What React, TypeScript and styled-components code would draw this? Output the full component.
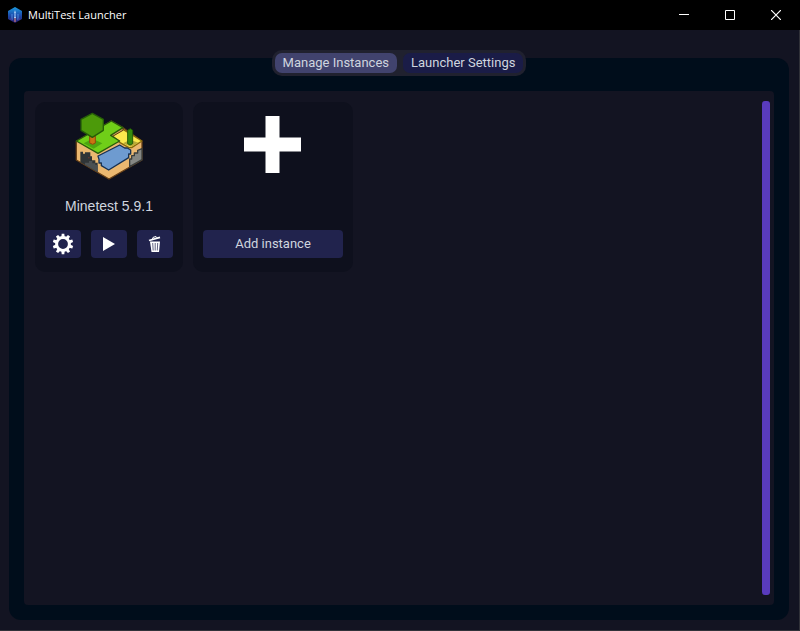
import React from "react";
import styled, { createGlobalStyle } from "styled-components";

const GlobalStyle = createGlobalStyle`
  *, *::before, *::after { box-sizing: border-box; }
  html, body, #root { height: 100%; }
  body { margin: 0; background: #131422; }
  button { border: 0; padding: 0; color: inherit; font: inherit; cursor: pointer; }
  svg { display: block; }
`;

const Window = styled.div`
  display: flex;
  flex-direction: column;
  min-height: 100%;
  background: #131422;
  color: #cfd5df;
  font: 13px/16px Roboto, sans-serif;
`;

const TitleBar = styled.header`
  display: flex;
  align-items: center;
  height: 30px;
  padding: 0 1px 0 7px;
  background: #000;
  color: #fff;
`;

const AppTitle = styled.h1`
  flex: 1;
  margin: 0 0 0 5px;
  font: 400 11px/16px "Open Sans", "Noto Sans", sans-serif;
`;

const CaptionButton = styled.button`
  display: grid;
  place-items: center;
  width: 46px;
  height: 28px;
  background: transparent;
`;

const Body = styled.main`
  flex: 1;
  display: flex;
  flex-direction: column;
  padding: 28px 10px 10px 9px;
  border: solid #303138;
  border-width: 0 1px 1px 0;
`;

const TabPanel = styled.section`
  flex: 1;
  display: flex;
  flex-direction: column;
  align-items: center;
  padding: 0 15px 15px;
  border-radius: 12px;
  background: #000d1b;
`;

const TabList = styled.div`
  display: flex;
  gap: 6px;
  margin: -8px 0 15px;
  padding: 3px;
  border-radius: 10px;
  background: #20212f;
`;

const Tab = styled.button<{ $active?: boolean }>`
  height: 20px;
  padding: 0 8px;
  border-radius: 7px;
  background: ${(p) => (p.$active ? "#41436e" : "#1a1c47")};
`;

const ScrollArea = styled.div`
  flex: 1;
  align-self: stretch;
  display: flex;
  justify-content: space-between;
  padding: 10px 4px 10px 11px;
  border-radius: 4px;
  background: #131422;
`;

const Instances = styled.div`
  display: flex;
  align-items: flex-start;
  gap: 10px;
  padding-top: 1px;
`;

const Card = styled.article`
  display: flex;
  flex-direction: column;
  align-items: center;
  justify-content: space-between;
  height: 170px;
  padding: 10px 10px 14px;
  border-radius: 10px;
  background: #0e101d;
`;

const InstanceName = styled.h2`
  margin: 0;
  font: 400 14px/16px "Liberation Sans", Arial, sans-serif;
`;

const Actions = styled.div`
  display: flex;
  gap: 10px;
`;

const ActionButton = styled.button<{ $wide?: boolean }>`
  display: grid;
  place-items: center;
  width: ${(p) => (p.$wide ? "140px" : "36px")};
  height: 28px;
  border-radius: 4px;
  background: #21234d;
`;

const ScrollThumb = styled.div`
  width: 8px;
  border-radius: 3px;
  background: #593bbd;
`;

const AppLogo = () => (
  <svg width="16" height="18" viewBox="0 0 16 18" aria-hidden="true">
    <defs>
      <linearGradient id="hex" x1="0" y1="0" x2="0" y2="1">
        <stop offset="0" stopColor="#1a9be0" />
        <stop offset=".5" stopColor="#1c4fae" />
        <stop offset="1" stopColor="#23186b" />
      </linearGradient>
    </defs>
    <path d="m8 1 7 4v8l-7 4-7-4V5Z" fill="url(#hex)" />
    <path d="M5 8v6M11 8v6" stroke="#4f8de0" />
    <path d="M8 4 7 7v5h2V7Z" fill="#a9cdf5" />
    <path d="M8 7v4" stroke="#2762bd" />
    <path d="M8 12v4" stroke="#ef8c78" />
    <path d="m2 13 2-1 2 3ZM14 13l-2-1-2 3Z" fill="#403c9b" />
  </svg>
);

const WorldIcon = () => (
  <svg width="80" height="70" viewBox="-2 12 240 210" strokeLinejoin="round" role="img" aria-label="Minetest">
    <path d="M20 100 125 39l35 20 57 41v56l-99 57-98-57Z" fill="#ebb870" stroke="#684017" strokeWidth="4" />
    <path d="M32 131h8v6h6v-4h16v12h5v12h10v7h7v29l-52-30Z" fill="#303537" />
    <path d="M46 170v-6h12v-5h10v7h9v5h7v21Z" fill="#4b5052" />
    <path d="M55 148h5v3h-5Z" fill="#71382f" />
    <path d="M217 122v33l-37 21v-23h6v-10h8v-8h10v-8Z" fill="#858783" stroke="#3b3e3c" strokeWidth="4" />
    <path d="m128 83 32-19 57 35-31 20h-8l-27-15Z" fill="#fbe84d" stroke="#87670b" strokeWidth="4" />
    <path d="m121 79 39-20v8l-31 18Z" fill="#d6a75c" stroke="#5e3c18" strokeWidth="3" />
    <path d="m20 99 105-60 35 20-37 23 27 17-65 37Z" fill="#70ce18" stroke="#285b0a" strokeWidth="4" />
    <path d="m85 144 65-33 15 9h8l10 6v12h-6v11l-60 37-22-13v-8h-7v-11Z" fill="#6e9bd0" stroke="#183253" strokeWidth="4" />
    <path d="m42 106 26-14 30 14-26 16Z" fill="#4da411" />
    <path d="m160 106 21-11 25 9-22 12Z" fill="#b8a938" />
    <path d="M60 83h17v22l-8 4-9-4Z" fill="#cb7412" stroke="#92480c" strokeWidth="3" />
    <path d="m68 16 33 18v33L68 88 34 67V34Z" fill="#4c9a0a" stroke="#255d08" strokeWidth="4" />
    <path d="m174 67 8-5 7 5v40l-8 4-7-4Z" fill="#368c0c" stroke="#215b08" strokeWidth="3" />
  </svg>
);

const TEETH = Array.from({ length: 10 }, (_, i) => i * 36);

const GearIcon = () => (
  <svg width="22" height="22" viewBox="-11 -11 22 22" aria-hidden="true">
    <circle r="6.4" fill="none" stroke="#fff" strokeWidth="3" />
    {TEETH.map((angle) => (
      <path key={angle} d="M-1.700-7-1.300-10.200h2.600L1.700-7Z" fill="#fff" transform={`rotate(${angle})`} />
    ))}
  </svg>
);

const PlayIcon = () => (
  <svg width="14" height="14" viewBox="0 0 14 14" aria-hidden="true">
    <path d="M1 0v14l12-7Z" fill="#fff" />
  </svg>
);

const TrashIcon = () => (
  <svg width="14" height="16" viewBox="0 0 14 16" fill="none" aria-hidden="true">
    <path d="M1 4.500 12 1.300" stroke="#fff" strokeWidth="1.800" />
    <path d="m4.500 3 .5-1.600 3-.9 1 1.300" stroke="#fff" />
    <path d="M2 5.500h10L11 16H3.500Z" fill="#fff" />
    <path d="m4.700 7 .5 7.500M7.200 7v7.500M9.700 7l-.4 7.500" stroke="#21234d" strokeWidth=".7" />
  </svg>
);

const PlusIcon = () => (
  <svg width="64" height="64" viewBox="0 0 64 64" aria-hidden="true">
    <path d="M24.500 4h14v21.500H60v14H38.500V61h-14V39.500H3v-14h21.500Z" fill="#fff" />
  </svg>
);

export default function App() {
  return (
    <Window>
      <GlobalStyle />
      <TitleBar>
        <AppLogo />
        <AppTitle>MultiTest Launcher</AppTitle>
        <CaptionButton aria-label="Minimize">
          <svg width="10" height="10"><path d="M0 4.500h10" stroke="#fff" /></svg>
        </CaptionButton>
        <CaptionButton aria-label="Maximize">
          <svg width="10" height="10"><path d="M.5.5h9v9h-9Z" fill="none" stroke="#fff" /></svg>
        </CaptionButton>
        <CaptionButton aria-label="Close">
          <svg width="10" height="10"><path d="m0 0 10 10M10 0 0 10" stroke="#fff" strokeWidth="1.200" /></svg>
        </CaptionButton>
      </TitleBar>
      <Body>
        <TabPanel>
          <TabList role="tablist">
            <Tab $active role="tab" aria-selected="true">Manage Instances</Tab>
            <Tab role="tab" aria-selected="false">Launcher Settings</Tab>
          </TabList>
          <ScrollArea role="tabpanel">
            <Instances>
              <Card>
                <WorldIcon />
                <InstanceName>Minetest 5.9.1</InstanceName>
                <Actions>
                  <ActionButton aria-label="Instance settings"><GearIcon /></ActionButton>
                  <ActionButton aria-label="Play"><PlayIcon /></ActionButton>
                  <ActionButton aria-label="Delete"><TrashIcon /></ActionButton>
                </Actions>
              </Card>
              <Card>
                <PlusIcon />
                <ActionButton $wide>Add instance</ActionButton>
              </Card>
            </Instances>
            <ScrollThumb />
          </ScrollArea>
        </TabPanel>
      </Body>
    </Window>
  );
}
